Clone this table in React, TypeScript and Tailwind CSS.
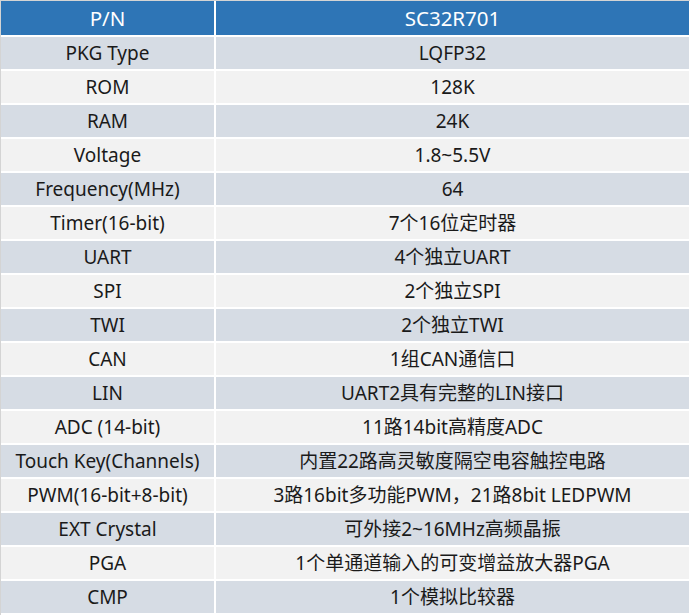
const rows: [string, string][] = [
  ["PKG Type", "LQFP32"],
  ["ROM", "128K"],
  ["RAM", "24K"],
  ["Voltage", "1.8~5.5V"],
  ["Frequency(MHz)", "64"],
  ["Timer(16-bit)", "7个16位定时器"],
  ["UART", "4个独立UART"],
  ["SPI", "2个独立SPI"],
  ["TWI", "2个独立TWI"],
  ["CAN", "1组CAN通信口"],
  ["LIN", "UART2具有完整的LIN接口"],
  ["ADC (14-bit)", "11路14bit高精度ADC"],
  ["Touch Key(Channels)", "内置22路高灵敏度隔空电容触控电路"],
  ["PWM(16-bit+8-bit)", "3路16bit多功能PWM，21路8bit LEDPWM"],
  ["EXT Crystal", "可外接2~16MHz高频晶振"],
  ["PGA", "1个单通道输入的可变增益放大器PGA"],
  ["CMP", "1个模拟比较器"],
];

const App = () => {
  return (
    <div className="h-[615px] w-[690px] overflow-hidden border-l border-t border-[#d4d4d4] bg-white pr-[1px] font-['Noto_Sans','Noto_Sans_CJK_SC',sans-serif] text-[19px] text-[#1a1a1a]">
      {/* Header */}
      <div className="grid h-[34px] grid-cols-[213px_1fr] gap-x-[2px]">
        <div className="flex items-center justify-center bg-[#2e75b6] text-[20.5px] text-white">
          P/N
        </div>
        <div className="flex items-center justify-center bg-[#2e75b6] text-[20.5px] text-white">
          SC32R701
        </div>
      </div>

      {/* Rows */}
      {rows.map(([label, value], index) => (
        <div
          key={label}
          className="mt-[2px] grid h-[32px] grid-cols-[213px_1fr] gap-x-[2px]"
        >
          <div
            className={
              index % 2 === 0
                ? "flex items-center justify-center bg-[#d6dce4]"
                : "flex items-center justify-center bg-[#f2f2f2]"
            }
          >
            {label}
          </div>
          <div
            className={
              index % 2 === 0
                ? "flex items-center justify-center bg-[#d6dce4]"
                : "flex items-center justify-center bg-[#f2f2f2]"
            }
          >
            {value}
          </div>
        </div>
      ))}
    </div>
  );
};

export default App;
